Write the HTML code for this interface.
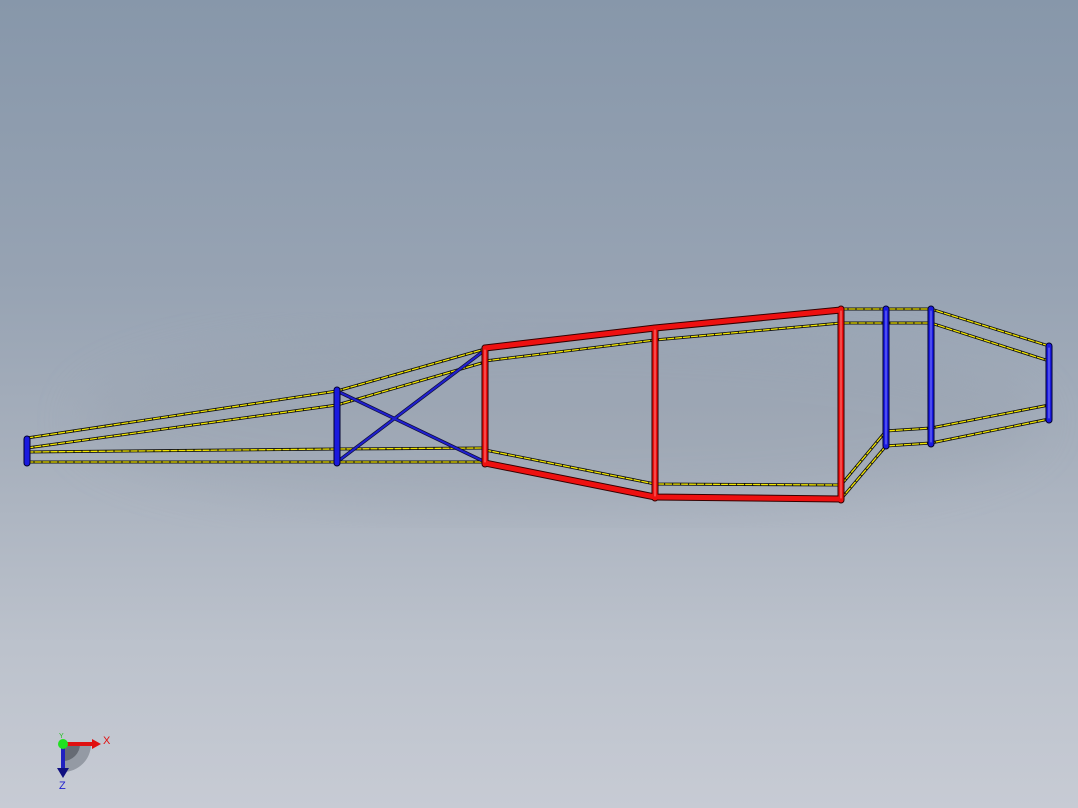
<!DOCTYPE html>
<html><head><style>
html,body{margin:0;padding:0}
body{width:1078px;height:808px;overflow:hidden;background:linear-gradient(#8797aa 0%,#97a3b3 35%,#a6afbc 55%,#bcc2cc 80%,#c7cbd4 100%)}
svg{position:absolute;left:0;top:0}
</style></head><body>
<svg width="1078" height="808" viewBox="0 0 1078 808">
<defs>
<filter id="b"><feGaussianBlur stdDeviation="25"/></filter>
</defs>
<ellipse cx="560" cy="420" rx="480" ry="90" fill="#8e98a6" opacity="0.25" filter="url(#b)"/>
<g fill="none" stroke-linecap="round" stroke-linejoin="round">
<g stroke="#111" stroke-width="3">
<polyline points="27,438 337,391 485,349"/>
<polyline points="27,448 337,405 485,362"/>
<polyline points="27,452 337,449 485,448"/>
<polyline points="27,462 337,462 485,462"/>
<polyline points="485,361 655,340 841,323 931,323 1049,361"/>
<polyline points="841,309 931,309 1049,346"/>
<polyline points="485,450 655,484 841,485 886,431 931,428 1049,405"/>
<polyline points="841,499 886,446 931,443 1049,419"/>
</g>
<g stroke="#f2e600" stroke-width="1.3" stroke-dasharray="6 2">
<polyline points="27,438 337,391 485,349"/>
<polyline points="27,448 337,405 485,362"/>
<polyline points="27,452 337,449 485,448"/>
<polyline points="27,462 337,462 485,462"/>
<polyline points="485,361 655,340 841,323 931,323 1049,361"/>
<polyline points="841,309 931,309 1049,346"/>
<polyline points="485,450 655,484 841,485 886,431 931,428 1049,405"/>
<polyline points="841,499 886,446 931,443 1049,419"/>
</g>
<g stroke="#101040" stroke-width="3.5">
<line x1="337" y1="391" x2="485" y2="462"/><line x1="337" y1="462" x2="485" y2="350"/>
</g>
<g stroke="#2020d0" stroke-width="2">
<line x1="337" y1="391" x2="485" y2="462"/><line x1="337" y1="462" x2="485" y2="350"/>
</g>
<g stroke="#300" stroke-width="7">
<polyline points="485,348 655,328 841,310"/>
<polyline points="485,463 655,497 841,499"/>
<line x1="485" y1="348" x2="485" y2="464"/>
<line x1="655" y1="328" x2="655" y2="498"/>
<line x1="841" y1="309" x2="841" y2="500"/>
</g>
<g stroke="#ee1010" stroke-width="5">
<polyline points="485,348 655,328 841,310"/>
<polyline points="485,463 655,497 841,499"/>
<line x1="485" y1="348" x2="485" y2="464"/>
<line x1="655" y1="328" x2="655" y2="498"/>
<line x1="841" y1="309" x2="841" y2="500"/>
</g>
<g stroke="#ff8080" stroke-width="1">
<line x1="485" y1="350" x2="485" y2="462"/>
<line x1="655" y1="330" x2="655" y2="496"/>
<line x1="841" y1="311" x2="841" y2="498"/>
</g>
<g stroke="#000030" stroke-width="7">
<line x1="27" y1="439" x2="27" y2="463"/>
<line x1="337" y1="390" x2="337" y2="463"/>
<line x1="886" y1="309" x2="886" y2="446"/>
<line x1="931" y1="309" x2="931" y2="444"/>
<line x1="1049" y1="346" x2="1049" y2="420"/>
</g>
<g stroke="#1a1ae0" stroke-width="5">
<line x1="27" y1="439" x2="27" y2="463"/>
<line x1="337" y1="390" x2="337" y2="463"/>
<line x1="886" y1="309" x2="886" y2="446"/>
<line x1="931" y1="309" x2="931" y2="444"/>
<line x1="1049" y1="346" x2="1049" y2="420"/>
</g>
<g stroke="#8080ff" stroke-width="1">
<line x1="886" y1="311" x2="886" y2="444"/>
<line x1="931" y1="311" x2="931" y2="442"/>
<line x1="1049" y1="348" x2="1049" y2="418"/>
</g>
</g>
<path d="M63,744 L91,744 A28,28 0 0 1 63,772 Z" fill="#888e98" opacity="0.8"/>
<path d="M63,744 L80,744 A17,17 0 0 1 63,761 Z" fill="#5a5f68" opacity="0.8"/>
<line x1="63" y1="744" x2="93" y2="744" stroke="#e01010" stroke-width="4"/>
<polygon points="92,739 101,744 92,749" fill="#e01010"/>
<line x1="63" y1="744" x2="63" y2="770" stroke="#2020c0" stroke-width="4"/>
<polygon points="57,768 69,768 63,778" fill="#101080"/>
<circle cx="63" cy="744" r="5" fill="#20e020"/>
<text x="103" y="744" fill="#e01010" font-family="Liberation Sans, sans-serif" font-size="11">X</text>
<text x="59" y="789" fill="#2020d0" font-family="Liberation Sans, sans-serif" font-size="11">Z</text>
<text x="59" y="738" fill="#20c020" font-family="Liberation Sans, sans-serif" font-size="7">Y</text>
</svg>
</body></html>
